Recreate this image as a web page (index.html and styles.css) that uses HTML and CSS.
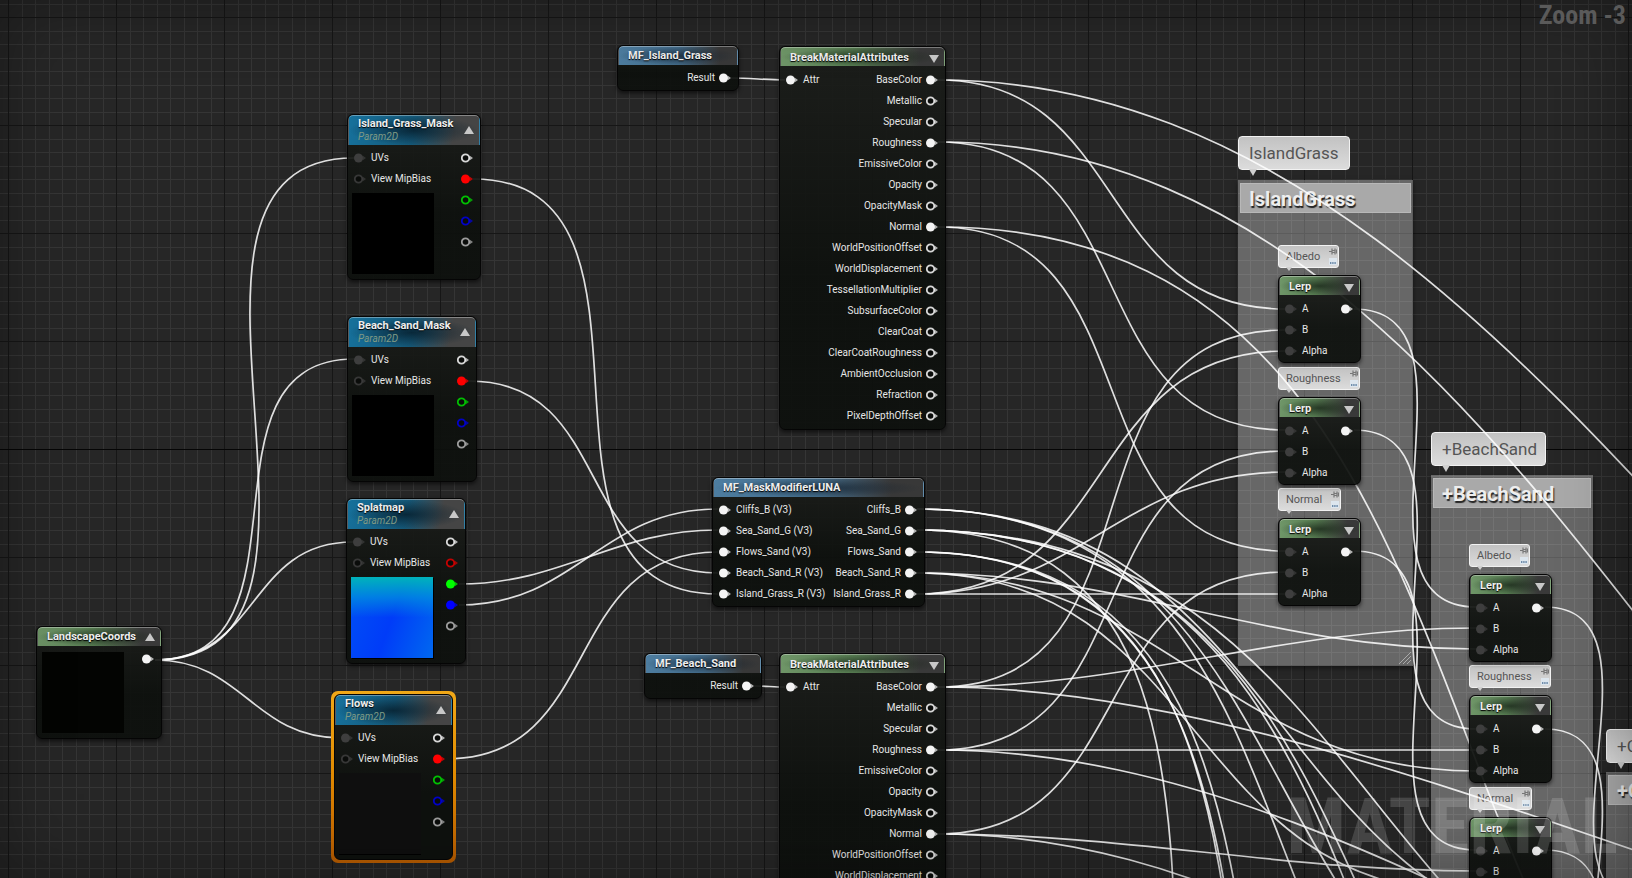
FILE: index.html
```html
<!DOCTYPE html>
<html lang="en">
  <head>
    <meta charset="utf-8">
    <title>Material Editor</title>
    <link rel="stylesheet" href="styles.css">
  </head>
  <body>
    <!-- shared shapes -->
    <svg class="defs" aria-hidden="true">
      <symbol id="pin" viewBox="0 0 12 10">
        <circle cx="4.5" cy="5" r="3.7" fill="#0a0c0a" stroke="currentColor" stroke-width="1.8" stroke-opacity=".88"/>
        <path d="M8.5 2.4L12 5L8.5 7.6Z" fill="currentColor" opacity=".7"/>
      </symbol>
      <symbol id="pin-on" viewBox="0 0 12 10">
        <circle cx="4.5" cy="5" r="4.5" fill="currentColor"/>
        <path d="M8.5 2.4L12 5L8.5 7.6Z" fill="currentColor" opacity=".7"/>
      </symbol>
      <symbol id="up" viewBox="0 0 10 8"><path d="M5 0L10 8H0Z" fill="currentColor"/></symbol>
      <symbol id="down" viewBox="0 0 10 8"><path d="M0 0H10L5 8Z" fill="currentColor"/></symbol>
      <symbol id="tack" viewBox="0 0 8 6">
        <path d="M0 3H3M3 0V6M3 2H6M3 4H6M6 0V6M7.5 1V5" fill="none" stroke="#777" stroke-width="1.2"/>
      </symbol>
      <symbol id="note" viewBox="0 0 8 7">
        <path d="M0 0H8V7H0Z" fill="#dde6ee"/>
        <path d="M1 5H7" fill="none" stroke="#4a6f94" stroke-width="1.4" stroke-dasharray="1.4 .8"/>
      </symbol>
    </svg>

    <main class="graph">
      <svg class="grid" aria-hidden="true">
        <defs>
          <pattern id="cells" x="8" y="17" width="108" height="108" patternUnits="userSpaceOnUse">
            <path class="minor" d="M14.5 0V108M27.5 0V108M41.5 0V108M54.5 0V108M68.5 0V108M81.5 0V108M95.5 0V108M0 14.5H108M0 27.5H108M0 41.5H108M0 54.5H108M0 68.5H108M0 81.5H108M0 95.5H108"/>
            <path class="major" d="M.5 0V108M0 .5H108"/>
          </pattern>
        </defs>
        <rect width="100%" height="100%" fill="url(#cells)"/>
        <path class="axis" d="M0 449.5H4000"/>
      </svg>

      <!-- comment boxes -->
      <section class="comment at-island"><h2>IslandGrass</h2>
        <svg class="grip" viewBox="0 0 12 12"><path d="M0 12L12 0M4 12L12 4M8 12L12 8"/></svg>
      </section>
      <section class="comment at-beach"><h2>+BeachSand</h2></section>
      <section class="comment at-cliffs"><h2>+Cliffs</h2></section>

      <div class="bubble big at-island-tag">IslandGrass</div>
      <div class="bubble big at-beach-tag">+BeachSand</div>
      <div class="bubble big at-cliffs-tag">+Cliffs</div>

      <div class="bubble at-note-1">Albedo<span class="tools"><button aria-label="Pin comment"><svg><use href="#tack"/></svg></button><button aria-label="Hide comment"><svg><use href="#note"/></svg></button></span></div>
      <div class="bubble at-note-2">Roughness<span class="tools"><button aria-label="Pin comment"><svg><use href="#tack"/></svg></button><button aria-label="Hide comment"><svg><use href="#note"/></svg></button></span></div>
      <div class="bubble at-note-3">Normal<span class="tools"><button aria-label="Pin comment"><svg><use href="#tack"/></svg></button><button aria-label="Hide comment"><svg><use href="#note"/></svg></button></span></div>
      <div class="bubble at-note-4">Albedo<span class="tools"><button aria-label="Pin comment"><svg><use href="#tack"/></svg></button><button aria-label="Hide comment"><svg><use href="#note"/></svg></button></span></div>
      <div class="bubble at-note-5">Roughness<span class="tools"><button aria-label="Pin comment"><svg><use href="#tack"/></svg></button><button aria-label="Hide comment"><svg><use href="#note"/></svg></button></span></div>
      <div class="bubble at-note-6">Normal<span class="tools"><button aria-label="Pin comment"><svg><use href="#tack"/></svg></button><button aria-label="Hide comment"><svg><use href="#note"/></svg></button></span></div>

      <svg class="wires" id="wires" aria-hidden="true"></svg>

      <!-- texture and coordinate nodes -->
      <article class="node green coords at-coords">
        <header><h3>LandscapeCoords</h3><button aria-label="Collapse preview"><svg><use href="#up"/></svg></button></header>
        <div class="body">
          <div><div class="preview"></div></div>
          <ul class="out"><li><svg><use href="#pin-on"/></svg></li></ul>
        </div>
      </article>

      <article class="node teal param at-grass-mask">
        <header><div><h3>Island_Grass_Mask</h3><p>Param2D</p></div><button aria-label="Collapse preview"><svg><use href="#up"/></svg></button></header>
        <div class="body">
          <div>
            <ul><li><svg class="dim"><use href="#pin-on"/></svg>UVs</li><li><svg class="dim"><use href="#pin"/></svg>View MipBias</li></ul>
            <div class="preview"></div>
          </div>
          <ul class="out">
            <li><svg><use href="#pin"/></svg></li>
            <li><svg class="r"><use href="#pin-on"/></svg></li>
            <li><svg class="g"><use href="#pin"/></svg></li>
            <li><svg class="b"><use href="#pin"/></svg></li>
            <li><svg class="a"><use href="#pin"/></svg></li>
          </ul>
        </div>
      </article>

      <article class="node teal param at-sand-mask">
        <header><div><h3>Beach_Sand_Mask</h3><p>Param2D</p></div><button aria-label="Collapse preview"><svg><use href="#up"/></svg></button></header>
        <div class="body">
          <div>
            <ul><li><svg class="dim"><use href="#pin-on"/></svg>UVs</li><li><svg class="dim"><use href="#pin"/></svg>View MipBias</li></ul>
            <div class="preview"></div>
          </div>
          <ul class="out">
            <li><svg><use href="#pin"/></svg></li>
            <li><svg class="r"><use href="#pin-on"/></svg></li>
            <li><svg class="g"><use href="#pin"/></svg></li>
            <li><svg class="b"><use href="#pin"/></svg></li>
            <li><svg class="a"><use href="#pin"/></svg></li>
          </ul>
        </div>
      </article>

      <article class="node teal param at-splat">
        <header><div><h3>Splatmap</h3><p>Param2D</p></div><button aria-label="Collapse preview"><svg><use href="#up"/></svg></button></header>
        <div class="body">
          <div>
            <ul><li><svg class="dim"><use href="#pin-on"/></svg>UVs</li><li><svg class="dim"><use href="#pin"/></svg>View MipBias</li></ul>
            <div class="preview splat"></div>
          </div>
          <ul class="out">
            <li><svg><use href="#pin"/></svg></li>
            <li><svg class="r2"><use href="#pin"/></svg></li>
            <li><svg class="g2"><use href="#pin-on"/></svg></li>
            <li><svg class="b2"><use href="#pin-on"/></svg></li>
            <li><svg class="a"><use href="#pin"/></svg></li>
          </ul>
        </div>
      </article>

      <div class="selected at-flows">
        <article class="node teal param">
          <header><div><h3>Flows</h3><p>Param2D</p></div><button aria-label="Collapse preview"><svg><use href="#up"/></svg></button></header>
          <div class="body">
            <div>
              <ul><li><svg class="dim"><use href="#pin-on"/></svg>UVs</li><li><svg class="dim"><use href="#pin"/></svg>View MipBias</li></ul>
              <div class="preview flat"></div>
            </div>
            <ul class="out">
              <li><svg><use href="#pin"/></svg></li>
              <li><svg class="r"><use href="#pin-on"/></svg></li>
              <li><svg class="g"><use href="#pin"/></svg></li>
              <li><svg class="b"><use href="#pin"/></svg></li>
              <li><svg class="a"><use href="#pin"/></svg></li>
            </ul>
          </div>
        </article>
      </div>

      <!-- material functions -->
      <article class="node blue at-island-fn">
        <header><h3>MF_Island_Grass</h3></header>
        <div class="body"><ul></ul><ul class="out"><li>Result<svg><use href="#pin-on"/></svg></li></ul></div>
      </article>

      <article class="node blue at-beach-fn">
        <header><h3>MF_Beach_Sand</h3></header>
        <div class="body"><ul></ul><ul class="out"><li>Result<svg><use href="#pin-on"/></svg></li></ul></div>
      </article>

      <article class="node blue at-modifier">
        <header><h3>MF_MaskModifierLUNA</h3></header>
        <div class="body">
          <ul>
            <li><svg><use href="#pin-on"/></svg>Cliffs_B (V3)</li>
            <li><svg><use href="#pin-on"/></svg>Sea_Sand_G (V3)</li>
            <li><svg><use href="#pin-on"/></svg>Flows_Sand (V3)</li>
            <li><svg><use href="#pin-on"/></svg>Beach_Sand_R (V3)</li>
            <li><svg><use href="#pin-on"/></svg>Island_Grass_R (V3)</li>
          </ul>
          <ul class="out">
            <li>Cliffs_B<svg><use href="#pin-on"/></svg></li>
            <li>Sea_Sand_G<svg><use href="#pin-on"/></svg></li>
            <li>Flows_Sand<svg><use href="#pin-on"/></svg></li>
            <li>Beach_Sand_R<svg><use href="#pin-on"/></svg></li>
            <li>Island_Grass_R<svg><use href="#pin-on"/></svg></li>
          </ul>
        </div>
      </article>

      <article class="node green break at-break-1">
        <header><h3>BreakMaterialAttributes</h3><button aria-label="Collapse node"><svg><use href="#down"/></svg></button></header>
        <div class="body">
          <ul><li><svg><use href="#pin-on"/></svg>Attr</li></ul>
          <ul class="out">
            <li>BaseColor<svg><use href="#pin-on"/></svg></li>
            <li>Metallic<svg><use href="#pin"/></svg></li>
            <li>Specular<svg><use href="#pin"/></svg></li>
            <li>Roughness<svg><use href="#pin-on"/></svg></li>
            <li>EmissiveColor<svg><use href="#pin"/></svg></li>
            <li>Opacity<svg><use href="#pin"/></svg></li>
            <li>OpacityMask<svg><use href="#pin"/></svg></li>
            <li>Normal<svg><use href="#pin-on"/></svg></li>
            <li>WorldPositionOffset<svg><use href="#pin"/></svg></li>
            <li>WorldDisplacement<svg><use href="#pin"/></svg></li>
            <li>TessellationMultiplier<svg><use href="#pin"/></svg></li>
            <li>SubsurfaceColor<svg><use href="#pin"/></svg></li>
            <li>ClearCoat<svg><use href="#pin"/></svg></li>
            <li>ClearCoatRoughness<svg><use href="#pin"/></svg></li>
            <li>AmbientOcclusion<svg><use href="#pin"/></svg></li>
            <li>Refraction<svg><use href="#pin"/></svg></li>
            <li>PixelDepthOffset<svg><use href="#pin"/></svg></li>
          </ul>
        </div>
      </article>

      <article class="node green break at-break-2">
        <header><h3>BreakMaterialAttributes</h3><button aria-label="Collapse node"><svg><use href="#down"/></svg></button></header>
        <div class="body">
          <ul><li><svg><use href="#pin-on"/></svg>Attr</li></ul>
          <ul class="out">
            <li>BaseColor<svg><use href="#pin-on"/></svg></li>
            <li>Metallic<svg><use href="#pin"/></svg></li>
            <li>Specular<svg><use href="#pin"/></svg></li>
            <li>Roughness<svg><use href="#pin-on"/></svg></li>
            <li>EmissiveColor<svg><use href="#pin"/></svg></li>
            <li>Opacity<svg><use href="#pin"/></svg></li>
            <li>OpacityMask<svg><use href="#pin"/></svg></li>
            <li>Normal<svg><use href="#pin-on"/></svg></li>
            <li>WorldPositionOffset<svg><use href="#pin"/></svg></li>
            <li>WorldDisplacement<svg><use href="#pin"/></svg></li>
          </ul>
        </div>
      </article>

      <!-- blend nodes -->
      <article class="node green lerp at-lerp-1">
        <header><h3>Lerp</h3><button aria-label="Collapse node"><svg><use href="#down"/></svg></button></header>
        <div class="body">
          <ul><li><svg class="dim"><use href="#pin-on"/></svg>A</li><li><svg class="dim"><use href="#pin-on"/></svg>B</li><li><svg class="dim"><use href="#pin-on"/></svg>Alpha</li></ul>
          <ul class="out"><li><svg><use href="#pin-on"/></svg></li></ul>
        </div>
      </article>
      <article class="node green lerp at-lerp-2">
        <header><h3>Lerp</h3><button aria-label="Collapse node"><svg><use href="#down"/></svg></button></header>
        <div class="body">
          <ul><li><svg class="dim"><use href="#pin-on"/></svg>A</li><li><svg class="dim"><use href="#pin-on"/></svg>B</li><li><svg class="dim"><use href="#pin-on"/></svg>Alpha</li></ul>
          <ul class="out"><li><svg><use href="#pin-on"/></svg></li></ul>
        </div>
      </article>
      <article class="node green lerp at-lerp-3">
        <header><h3>Lerp</h3><button aria-label="Collapse node"><svg><use href="#down"/></svg></button></header>
        <div class="body">
          <ul><li><svg class="dim"><use href="#pin-on"/></svg>A</li><li><svg class="dim"><use href="#pin-on"/></svg>B</li><li><svg class="dim"><use href="#pin-on"/></svg>Alpha</li></ul>
          <ul class="out"><li><svg><use href="#pin-on"/></svg></li></ul>
        </div>
      </article>
      <article class="node green lerp at-lerp-4">
        <header><h3>Lerp</h3><button aria-label="Collapse node"><svg><use href="#down"/></svg></button></header>
        <div class="body">
          <ul><li><svg class="dim"><use href="#pin-on"/></svg>A</li><li><svg class="dim"><use href="#pin-on"/></svg>B</li><li><svg class="dim"><use href="#pin-on"/></svg>Alpha</li></ul>
          <ul class="out"><li><svg><use href="#pin-on"/></svg></li></ul>
        </div>
      </article>
      <article class="node green lerp at-lerp-5">
        <header><h3>Lerp</h3><button aria-label="Collapse node"><svg><use href="#down"/></svg></button></header>
        <div class="body">
          <ul><li><svg class="dim"><use href="#pin-on"/></svg>A</li><li><svg class="dim"><use href="#pin-on"/></svg>B</li><li><svg class="dim"><use href="#pin-on"/></svg>Alpha</li></ul>
          <ul class="out"><li><svg><use href="#pin-on"/></svg></li></ul>
        </div>
      </article>
      <article class="node green lerp at-lerp-6">
        <header><h3>Lerp</h3><button aria-label="Collapse node"><svg><use href="#down"/></svg></button></header>
        <div class="body">
          <ul><li><svg class="dim"><use href="#pin-on"/></svg>A</li><li><svg class="dim"><use href="#pin-on"/></svg>B</li></ul>
          <ul class="out"><li><svg><use href="#pin-on"/></svg></li></ul>
        </div>
      </article>

      <div class="shade"></div>
      <div class="zoom">Zoom -3</div>
      <div class="watermark">MATERIAL</div>
    </main>

    <script src="script.js"></script>
  </body>
</html>
```
FILE: styles.css
```css
* {
  box-sizing: border-box;
}

body {
  margin: 0;
  background: #262626;
  color: #e6e6e6;
  font: 10px/21px Roboto, "Liberation Sans", sans-serif;
}

h2, h3, p, ul {
  margin: 0;
  padding: 0;
}

ul {
  list-style: none;
}

button {
  display: block;
  padding: 0;
  border: 0;
  background: none;
  color: #c8c8c8;
  cursor: pointer;
}

.defs {
  position: absolute;
  width: 0;
  height: 0;
}

.graph {
  position: relative;
  height: 100vh;
  overflow: hidden;
}

.grid, .wires, .shade {
  position: absolute;
  inset: 0;
  width: 100%;
  height: 100%;
}

.grid path {
  fill: none;
  shape-rendering: crispEdges;
}

.minor { stroke: #353535; }
.major { stroke: #161616; }
.axis { stroke: #050505; }

.wires path {
  fill: none;
  stroke: #fff;
  stroke-opacity: 0.85;
  stroke-width: 1.7;
}

.shade {
  box-shadow: inset 0 0 70px rgba(0, 0, 0, 0.35);
  pointer-events: none;
}

/* nodes */
.node {
  position: absolute;
  border: 1px solid #050505;
  border-radius: 6px;
  background: linear-gradient(rgba(27, 29, 26, 0.93), rgba(13, 16, 13, 0.93) 60%);
  box-shadow: 0 2px 4px rgba(0, 0, 0, 0.6);
  overflow: hidden;
}

.node header {
  display: flex;
  justify-content: space-between;
  height: 19px;
  padding: 0 5px 0 9px;
  border: 1px solid rgba(255, 255, 255, 0.12);
  border-top-color: rgba(255, 255, 255, 0.35);
  border-width: 1px 1px 0;
  border-radius: 5px 5px 0 0;
  line-height: 18px;
}

.node h3 {
  font-size: 11px;
  line-height: inherit;
  font-weight: 700;
  color: #eee;
  text-shadow: 0 1px 1px #000;
  white-space: nowrap;
}

.node header svg {
  display: block;
  width: 10px;
  height: 8px;
}

.green header {
  background: radial-gradient(closest-side, rgba(20, 32, 20, 0.7), rgba(20, 32, 20, 0)), linear-gradient(to right, #6f9668, #557a50 45%, #393939 85%);
}

.blue header {
  background: radial-gradient(closest-side, rgba(16, 30, 44, 0.7), rgba(16, 30, 44, 0)), linear-gradient(to right, #4d7da0, #426a88 50%, #383838 85%);
}

.teal header {
  background: radial-gradient(closest-side, rgba(5, 28, 42, 0.8), rgba(5, 28, 42, 0)), linear-gradient(100deg, #16719c, #155878 50%, #454545 80%);
}

.body {
  display: flex;
  justify-content: space-between;
  padding: 2px 7px 2px 6px;
}

.body li {
  display: flex;
  align-items: center;
  gap: 5px;
  height: 21px;
  white-space: nowrap;
}

.out li {
  justify-content: flex-end;
  gap: 4px;
}

.body svg {
  flex: none;
  width: 12px;
  height: 10px;
  color: #f4f4f4;
}

.body .dim { color: #3e3e3e; }
.body .r { color: #f00; }
.body .r2 { color: #d00; }
.body .g { color: #00d800; }
.body .g2 { color: #0f0; }
.body .b { color: #0000e0; }
.body .b2 { color: #00f; }
.body .a { color: #b0b0b0; }

.preview {
  width: 82px;
  height: 81px;
  margin: 4px 0 3px -2px;
  background: #000;
}

.splat {
  background: linear-gradient(rgba(0, 190, 180, 0.9), rgba(0, 150, 220, 0.7) 25%, rgba(0, 60, 250, 0) 50%), linear-gradient(110deg, #0050f5, #003cf8 50%, #0068f0);
  box-shadow: 1px 1px #000;
}

.flat {
  background: #0f0f0f;
  box-shadow: 0 1px #000;
}

.param header {
  align-items: center;
  height: 30px;
  padding-bottom: 2px;
  line-height: 13px;
}

.param p {
  font-style: italic;
  line-height: 13px;
  color: #7f9a84;
}

.coords header {
  align-items: center;
}

.coords .preview {
  margin-left: -1px;
  background: #030402;
}

.break header,
.lerp header {
  line-height: 19px;
}

.break header button,
.lerp header button {
  margin-top: 4px;
}

.break .body {
  padding-top: 3px;
  padding-bottom: 3px;
}

.lerp .body {
  padding-top: 3px;
  padding-bottom: 1px;
}

.lerp {
  width: 83px;
}

.selected {
  position: absolute;
  width: 125px;
  padding: 3px;
  border-radius: 7px;
  background: linear-gradient(#f0a818, #e08a00 50%, #b85c00);
}

.selected .node {
  position: static;
  background: linear-gradient(#1b1d1a, #0e110e 60%);
  box-shadow: none;
}

.at-coords { left: 36px; top: 626px; width: 126px; }
.at-grass-mask { left: 347px; top: 114px; width: 134px; }
.at-sand-mask { left: 347px; top: 316px; width: 130px; }
.at-splat { left: 346px; top: 498px; width: 120px; }
.at-flows { left: 331px; top: 691px; }
.at-island-fn { left: 617px; top: 45px; width: 122px; }
.at-beach-fn { left: 644px; top: 653px; width: 118px; }
.at-modifier { left: 712px; top: 477px; width: 213px; }
.at-break-1 { left: 779px; top: 46px; width: 167px; }
.at-break-2 { left: 779px; top: 653px; width: 167px; }
.at-lerp-1 { left: 1278px; top: 275px; }
.at-lerp-2 { left: 1278px; top: 397px; }
.at-lerp-3 { left: 1278px; top: 518px; }
.at-lerp-4 { left: 1469px; top: 574px; }
.at-lerp-5 { left: 1469px; top: 695px; }
.at-lerp-6 { left: 1469px; top: 817px; }

/* comment boxes and note bubbles */
.comment {
  position: absolute;
  padding: 3px 2px;
  background: rgba(255, 255, 255, 0.3);
  box-shadow: 0 2px 5px rgba(0, 0, 0, 0.5);
}

.comment h2 {
  height: 30px;
  padding-left: 8px;
  border: 1px solid #b8b8b8;
  background: #a9a9a9;
  color: #eee;
  font-size: 20px;
  line-height: 30px;
  text-shadow: 1px 2px 1px #222;
  white-space: nowrap;
  overflow: hidden;
}

.grip {
  position: absolute;
  right: 2px;
  bottom: 2px;
  width: 12px;
  height: 12px;
  fill: none;
  stroke: #aaa;
}

.bubble {
  position: absolute;
  display: flex;
  justify-content: space-between;
  height: 23px;
  padding: 0 1px 0 7px;
  border: 1px solid #f2f2f2;
  border-radius: 3px;
  background: linear-gradient(#c2c2c2, #dcdcdc);
  color: #555;
  font-size: 11px;
  white-space: nowrap;
}

.bubble::after {
  content: "";
  position: absolute;
  left: 7px;
  top: 100%;
  border: 3px solid transparent;
  border-top: 4px solid #d0d0d0;
}

.big {
  height: 34px;
  padding: 0 11px 0 10px;
  border-radius: 4px;
  font-size: 17px;
  line-height: 33px;
}

.big::after {
  left: 10px;
  border-width: 7px 4px 0;
}

.tools {
  display: grid;
  align-content: center;
  gap: 3px;
}

.tools svg {
  display: block;
  width: 8px;
  height: 7px;
}

.at-island { left: 1238px; top: 180px; width: 175px; height: 486px; }
.at-beach { left: 1431px; top: 475px; width: 162px; height: 500px; }
.at-cliffs { left: 1606px; top: 772px; width: 180px; height: 400px; }
.at-island-tag { left: 1238px; top: 136px; width: 112px; }
.at-beach-tag { left: 1431px; top: 432px; width: 115px; }
.at-cliffs-tag { left: 1606px; top: 729px; width: 90px; }
.at-note-1 { left: 1278px; top: 245px; width: 61px; }
.at-note-2 { left: 1278px; top: 367px; width: 82px; }
.at-note-3 { left: 1278px; top: 488px; width: 63px; }
.at-note-4 { left: 1469px; top: 544px; width: 61px; }
.at-note-5 { left: 1469px; top: 665px; width: 82px; }
.at-note-6 { left: 1469px; top: 787px; width: 63px; }

/* overlays */
.zoom,
.watermark {
  position: absolute;
  right: 6px;
  font-family: "Roboto Condensed", "Liberation Sans Narrow", Roboto, sans-serif;
  font-weight: 700;
  pointer-events: none;
}

.zoom {
  top: 0;
  color: #5a5a5a;
  font-size: 26px;
  line-height: 30px;
}

.watermark {
  right: 14px;
  bottom: 3px;
  color: rgba(255, 255, 255, 0.15);
  font-size: 78px;
  line-height: 96px;
}
```
FILE: script.js
```js
const svg = document.getElementById("wires");

// x1, y1 (output pin), x2, y2 (input pin)
const wires = [
  // landscape coords -> texture UVs
  [155, 660, 354, 158],
  [155, 660, 354, 359],
  [155, 660, 353, 542],
  [155, 660, 341, 738],
  // textures -> mask modifier
  [473, 179, 718, 594],
  [469, 381, 718, 573],
  [459, 584, 718, 530],
  [459, 605, 718, 509],
  [446, 759, 718, 552],
  // functions -> break attributes
  [731, 78, 785, 80],
  [754, 686, 785, 687],
  // island grass attributes
  [938, 80, 1285, 309],
  [938, 80, 2538, 1099],
  [938, 142, 1285, 430],
  [938, 142, 2438, 1221],
  [938, 227, 1285, 551],
  [938, 227, 2002, 1263],
  // beach sand attributes
  [938, 687, 1285, 330],
  [938, 687, 1476, 628],
  [938, 687, 2338, 1016],
  [938, 750, 1285, 451],
  [938, 750, 1476, 750],
  [938, 750, 2338, 1215],
  [938, 834, 1285, 572],
  [938, 834, 1476, 871],
  [938, 834, 2338, 1434],
  // masks -> alpha
  [917, 594, 1285, 351],
  [917, 594, 1285, 472],
  [917, 594, 1285, 594],
  [917, 573, 1476, 649],
  [917, 573, 1476, 771],
  [917, 573, 1476, 893],
  [917, 552, 1567, 1552],
  [917, 552, 1579, 1592],
  [917, 552, 1599, 1532],
  [917, 530, 1437, 1530],
  [917, 530, 1830, 1069],
  [917, 530, 1830, 1312],
  [917, 530, 1830, 1380],
  [917, 509, 1651, 947],
  [917, 509, 1651, 1069],
  [917, 509, 1651, 1190],
  // lerp chain
  [1354, 309, 1476, 607],
  [1354, 430, 1476, 729],
  [1354, 551, 1476, 850],
  [1545, 607, 1651, 905],
  [1545, 729, 1651, 1027],
  [1545, 850, 1651, 1148]
];

for (const [x1, y1, x2, y2] of wires) {
  const reach = (Math.min(Math.abs(x2 - x1), 1000) + Math.min(Math.abs(y2 - y1), 1000)) / 3;
  const path = document.createElementNS("http://www.w3.org/2000/svg", "path");
  path.setAttribute("d", `M${x1} ${y1}C${x1 + reach} ${y1} ${x2 - reach} ${y2} ${x2} ${y2}`);
  svg.appendChild(path);
}
```
